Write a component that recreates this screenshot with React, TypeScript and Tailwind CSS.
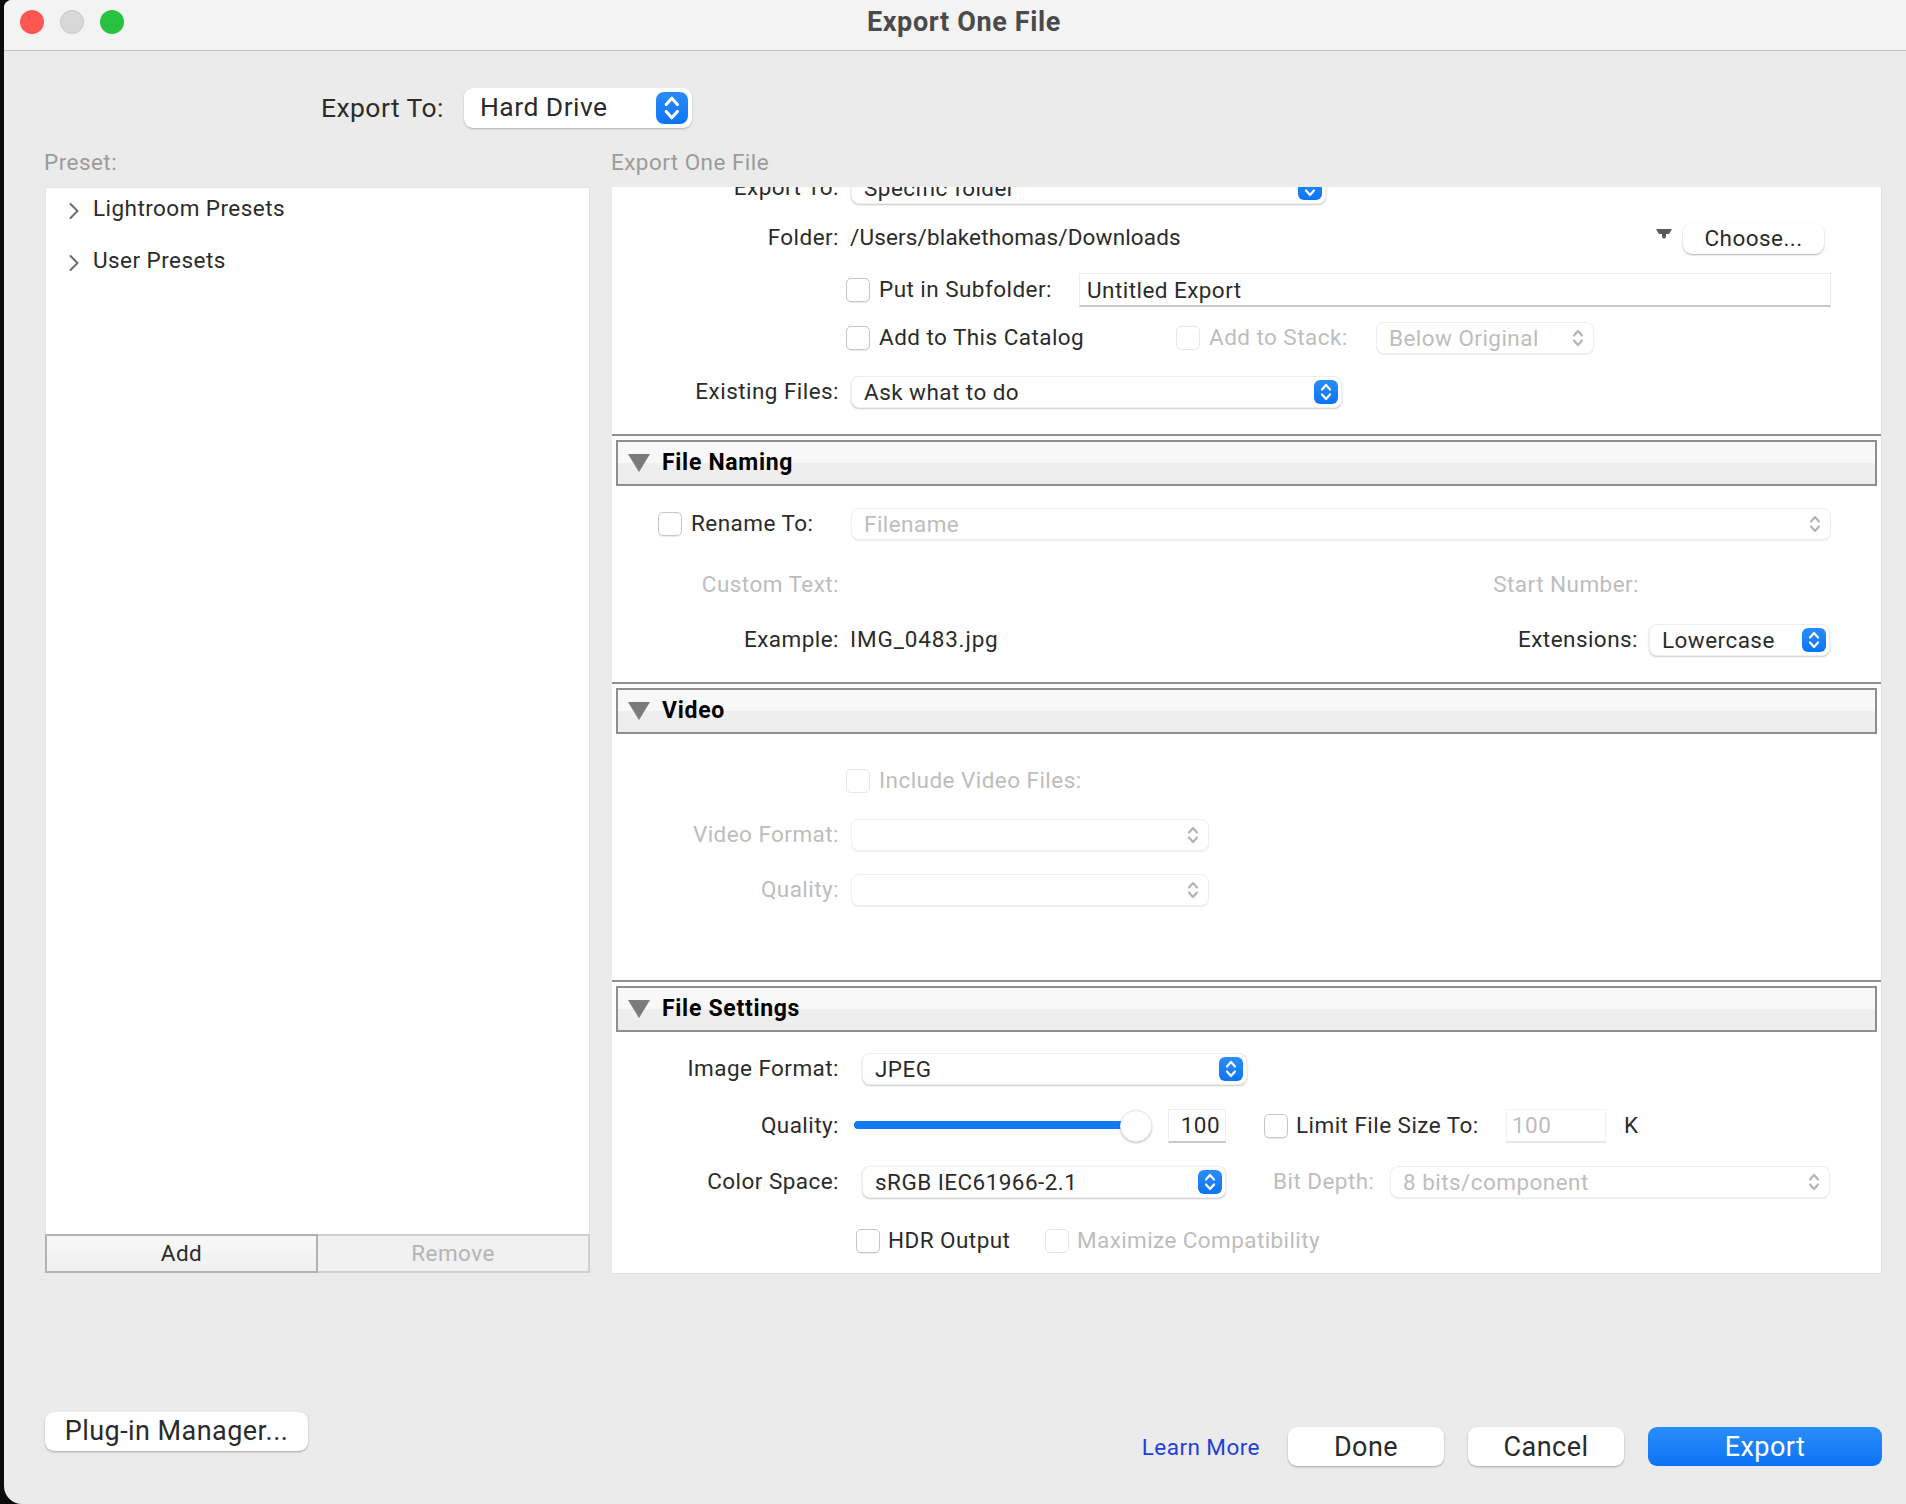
import type { ReactNode } from 'react';
import { ChevronRight } from 'lucide-react';

function UpDown({ color, size = 20 }: { color: string; size?: number }) {
  return (
    <svg width={size * 0.7} height={size} viewBox="0 0 14 20" fill="none" stroke={color} strokeWidth="2.2" strokeLinecap="round" strokeLinejoin="round">
      <path d="M3 7.5 7 3l4 4.5" />
      <path d="M3 12.5 7 17l4-4.5" />
    </svg>
  );
}

function Stepper({ disabled }: { disabled?: boolean }) {
  if (disabled) {
    return (
      <div className="w-[24px] h-[24px] flex items-center justify-center shrink-0">
        <UpDown color="#b4b4b4" />
      </div>
    );
  }
  return (
    <div className="w-[24px] h-[24px] rounded-[6px] bg-gradient-to-b from-[#2a8dfb] to-[#0a74f5] flex items-center justify-center shrink-0">
      <UpDown color="#ffffff" />
    </div>
  );
}

function Select({ text, className, disabled }: { text: string; className: string; disabled?: boolean }) {
  return (
    <div
      className={`h-[32px] pl-[12px] pr-[3px] rounded-[8px] bg-white flex items-center justify-between shrink-0 border border-[#efefef] ${
        disabled ? 'text-[#bdbdbd] shadow-[0_1px_1px_rgba(0,0,0,0.08)]' : 'text-[#2b2b2b] shadow-[0_1px_2px_rgba(0,0,0,0.22)]'
      } ${className}`}
    >
      <span className="pb-[1px]">{text}</span>
      <Stepper disabled={disabled} />
    </div>
  );
}

function Check({ disabled }: { disabled?: boolean }) {
  return (
    <div
      className={`w-[24px] h-[24px] rounded-[5px] bg-white shrink-0 border ${
        disabled ? 'border-[#e6e6e6]' : 'border-[#c6c6c6] shadow-[0_1px_1px_rgba(0,0,0,0.08)]'
      }`}
    />
  );
}

function Label({ children, disabled }: { children: ReactNode; disabled?: boolean }) {
  return (
    <div className={`w-[227px] text-right shrink-0 pb-[2px] ${disabled ? 'text-[#bdbdbd]' : 'text-[#2b2b2b]'}`}>{children}</div>
  );
}

function Row({ className, children }: { className: string; children: ReactNode }) {
  return <div className={`flex items-center h-[32px] [&>span]:pb-[2px] ${className}`}>{children}</div>;
}

function SectionHeader({ title }: { title: string }) {
  return (
    <div className="mt-[4px] mx-[4px] h-[46px] border-2 border-[#8e8e8e] bg-gradient-to-b from-[#f8f8f8] from-50% to-[#eeeeee] to-50% flex items-center pl-[10px] gap-[12px]">
      <svg width="22" height="18" viewBox="0 0 22 18">
        <path d="M0 0h22L11 18z" fill="#7b7b7b" />
      </svg>
      <span className="font-bold text-black text-[23px] tracking-[0.7px]">{title}</span>
    </div>
  );
}

function PanelButton({ text, className }: { text: string; className: string }) {
  return (
    <div className={`bg-white rounded-[9px] flex items-center justify-center text-[#2b2b2b] shadow-[0_1px_2px_rgba(0,0,0,0.3)] ${className}`}>
      {text}
    </div>
  );
}

function Divider({ className }: { className: string }) {
  return <div className={`h-[2px] bg-[#8e8e8e] w-[1270px] ${className}`} />;
}

export default function App() {
  return (
    <div className="w-[1906px] h-[1504px] bg-[#0b0b0b] pl-[4px] overflow-hidden font-['Roboto',sans-serif] text-[22.5px] leading-[28px] tracking-[0.45px]">
      <div className="h-full bg-[#ebebeb] flex flex-col rounded-tl-[8px] rounded-bl-[18px]">
        {/* Title bar */}
        <div className="h-[51px] shrink-0 bg-[#f3f3f3] border-b border-[#c4c4c4] flex items-center pl-[16px] pr-[102px] rounded-tl-[8px]">
          <div className="flex gap-[16px] shrink-0 mb-[6px]">
            <div className="w-[24px] h-[24px] rounded-full bg-[#fc5753]" />
            <div className="w-[24px] h-[24px] rounded-full bg-[#d8d8d8] border border-[#c8c8c8]" />
            <div className="w-[24px] h-[24px] rounded-full bg-[#27c23f]" />
          </div>
          <div className="flex-1 text-center font-bold text-[#4a4a4a] text-[27px] tracking-[0.65px] mb-[7px]">Export One File</div>
        </div>

        {/* Export To */}
        <div className="mt-[37px] ml-[300px] h-[40px] flex items-center gap-[20px] text-[26.5px] text-[#2b2b2b] shrink-0">
          <div className="w-[140px] text-right">Export To:</div>
          <div className="w-[228px] h-[40px] rounded-[9px] bg-white flex items-center justify-between pl-[16px] pr-[4px] shadow-[0_1px_2px_rgba(0,0,0,0.25)]">
            <span className="-mt-[2px]">Hard Drive</span>
            <div className="w-[32px] h-[32px] rounded-[8px] bg-gradient-to-b from-[#2a8dfb] to-[#0a74f5] flex items-center justify-center">
              <UpDown color="#ffffff" size={28} />
            </div>
          </div>
        </div>

        <div className="mt-[20px] ml-[40px] flex h-[28px] text-[#9b9b9b] shrink-0">
          <div className="w-[567px]">Preset:</div>
          <div>Export One File</div>
        </div>

        <div className="mt-[11px] ml-[41px] flex gap-[22px] h-[1087px] shrink-0">
          {/* Preset list */}
          <div className="w-[545px] flex flex-col pb-[1px]">
            <div className="flex-1 bg-white pl-[14px] pt-[6px] text-[#2b2b2b] border-t border-x border-[#e4e4e4]">
              <div className="flex items-center h-[28px]">
                <ChevronRight size={28} strokeWidth={1.8} className="text-[#6e6e6e] mt-[6px] shrink-0" />
                <span className="ml-[5px]">Lightroom Presets</span>
              </div>
              <div className="flex items-center h-[28px] mt-[24px]">
                <ChevronRight size={28} strokeWidth={1.8} className="text-[#6e6e6e] mt-[6px] shrink-0" />
                <span className="ml-[5px]">User Presets</span>
              </div>
            </div>
            <div className="h-[39px] flex shrink-0">
              <div className="w-[273px] border-2 border-[#b2b2b2] bg-gradient-to-b from-[#f8f8f8] to-[#f0f0f0] flex items-center justify-center text-[#2b2b2b] pb-[1px]">
                Add
              </div>
              <div className="flex-1 border-2 border-l-0 border-[#cfcfcf] bg-[#f1f1f1] flex items-center justify-center text-[#b4b4b4] pb-[1px]">
                Remove
              </div>
            </div>
          </div>

          {/* Settings panel */}
          <div className="w-[1270px] bg-white overflow-hidden border-b border-r border-[#e2e2e2]">
            <Row className="-mt-[15px]">
              <Label>Export To:</Label>
              <Select text="Specific folder" className="ml-[12px] w-[475px]" />
            </Row>
            <Row className="mt-[18px] text-[#2b2b2b]">
              <Label>Folder:</Label>
              <span className="ml-[11px] tracking-[0.15px]">/Users/blakethomas/Downloads</span>
              <svg width="16" height="10" viewBox="0 0 16 10" className="ml-auto mb-[8px]">
                <path d="M0 0h16l-3 5h-3v3l-2 2-2-2V5H3z" fill="#5a5a5a" />
              </svg>
              <PanelButton text="Choose..." className="ml-[11px] mr-[57px] w-[141px] h-[31px] pb-[1px]" />
            </Row>
            <Row className="mt-[19px] !h-[34px] text-[#2b2b2b]">
              <div className="ml-[234px]"><Check /></div>
              <span className="ml-[9px]">Put in Subfolder:</span>
              <div className="ml-auto mr-[50px] w-[752px] h-[34px] bg-white border border-[#ececec] border-b-2 border-b-[#c8c8c8] flex items-center pl-[7px]">
                Untitled Export
              </div>
            </Row>
            <Row className="mt-[15px] text-[#2b2b2b]">
              <div className="ml-[234px]"><Check /></div>
              <span className="ml-[9px] w-[297px]">Add to This Catalog</span>
              <Check disabled />
              <span className="ml-[9px] text-[#bdbdbd] w-[167px]">Add to Stack:</span>
              <Select text="Below Original" disabled className="w-[218px]" />
            </Row>
            <Row className="mt-[22px]">
              <Label>Existing Files:</Label>
              <Select text="Ask what to do" className="ml-[12px] w-[491px]" />
            </Row>
            <Divider className="mt-[26px]" />
            <SectionHeader title="File Naming" />

            <Row className="mt-[22px] text-[#2b2b2b]">
              <div className="ml-[46px]"><Check /></div>
              <span className="ml-[9px] w-[160px]">Rename To:</span>
              <Select text="Filename" disabled className="w-[980px]" />
            </Row>
            <Row className="mt-[29px] text-[#bdbdbd]">
              <Label disabled>Custom Text:</Label>
              <span className="ml-auto mr-[242px]">Start Number:</span>
            </Row>
            <Row className="mt-[23px] text-[#2b2b2b]">
              <Label>Example:</Label>
              <span className="ml-[11px] tracking-[0.85px]">IMG_0483.jpg</span>
              <span className="ml-auto">Extensions:</span>
              <Select text="Lowercase" className="ml-[11px] mr-[51px] w-[181px]" />
            </Row>
            <Divider className="mt-[26px]" />
            <SectionHeader title="Video" />

            <Row className="mt-[31px] text-[#bdbdbd]">
              <div className="ml-[234px]"><Check disabled /></div>
              <span className="ml-[9px]">Include Video Files:</span>
            </Row>
            <Row className="mt-[22px]">
              <Label disabled>Video Format:</Label>
              <Select text="" disabled className="ml-[12px] w-[358px]" />
            </Row>
            <Row className="mt-[23px]">
              <Label disabled>Quality:</Label>
              <Select text="" disabled className="ml-[12px] w-[358px]" />
            </Row>
            <Divider className="mt-[74px]" />
            <SectionHeader title="File Settings" />

            <Row className="mt-[21px]">
              <Label>Image Format:</Label>
              <Select text="JPEG" className="ml-[23px] w-[385px]" />
            </Row>
            <Row className="mt-[24px] !h-[34px] text-[#2b2b2b]">
              <Label>Quality:</Label>
              <div className="ml-[15px] w-[270px] h-[8px] -mt-[2px] rounded-l-full bg-[#0f7af6] shrink-0" />
              <div className="-ml-[4px] w-[32px] h-[32px] rounded-full bg-white border border-[#e8e8e8] shadow-[0_1px_2px_rgba(0,0,0,0.25)] shrink-0" />
              <div className="ml-[16px] w-[58px] h-[34px] border border-[#ececec] border-b-2 border-b-[#c8c8c8] flex items-center justify-end pr-[5px] pb-[1px] shrink-0">
                100
              </div>
              <div className="ml-[38px]"><Check /></div>
              <span className="ml-[8px] w-[210px]">Limit File Size To:</span>
              <div className="w-[100px] h-[34px] border border-[#f2f2f2] border-b-2 border-b-[#e6e6e6] flex items-center pl-[5px] pb-[1px] text-[#bdbdbd] shrink-0">
                100
              </div>
              <span className="ml-[18px]">K</span>
            </Row>
            <Row className="mt-[23px]">
              <Label>Color Space:</Label>
              <Select text="sRGB IEC61966-2.1" className="ml-[23px] w-[364px]" />
              <span className="ml-[47px] w-[117px] text-[#bdbdbd] whitespace-nowrap">Bit Depth:</span>
              <Select text="8 bits/component" disabled className="w-[440px]" />
            </Row>
            <Row className="mt-[27px] text-[#2b2b2b]">
              <div className="ml-[244px]"><Check /></div>
              <span className="ml-[8px] w-[157px]">HDR Output</span>
              <Check disabled />
              <span className="ml-[8px] text-[#bdbdbd] tracking-[0.4px]">Maximize Compatibility</span>
            </Row>
          </div>
        </div>

        {/* Footer */}
        <div className="mt-[138px] ml-[41px] mr-[24px] flex items-start text-[27px] shrink-0">
          <PanelButton text="Plug-in Manager..." className="w-[263px] h-[39px] pb-[1px]" />
          <div className="ml-auto mt-[15px] flex items-center">
            <span className="text-[22.5px] text-[#1f3fd8]">Learn More</span>
            <PanelButton text="Done" className="ml-[28px] w-[156px] h-[39px]" />
            <PanelButton text="Cancel" className="ml-[24px] w-[156px] h-[39px]" />
            <div className="ml-[24px] w-[234px] h-[39px] rounded-[9px] bg-gradient-to-b from-[#2a8dfb] to-[#0a74f5] text-white flex items-center justify-center">
              Export
            </div>
          </div>
        </div>
      </div>
    </div>
  );
}
